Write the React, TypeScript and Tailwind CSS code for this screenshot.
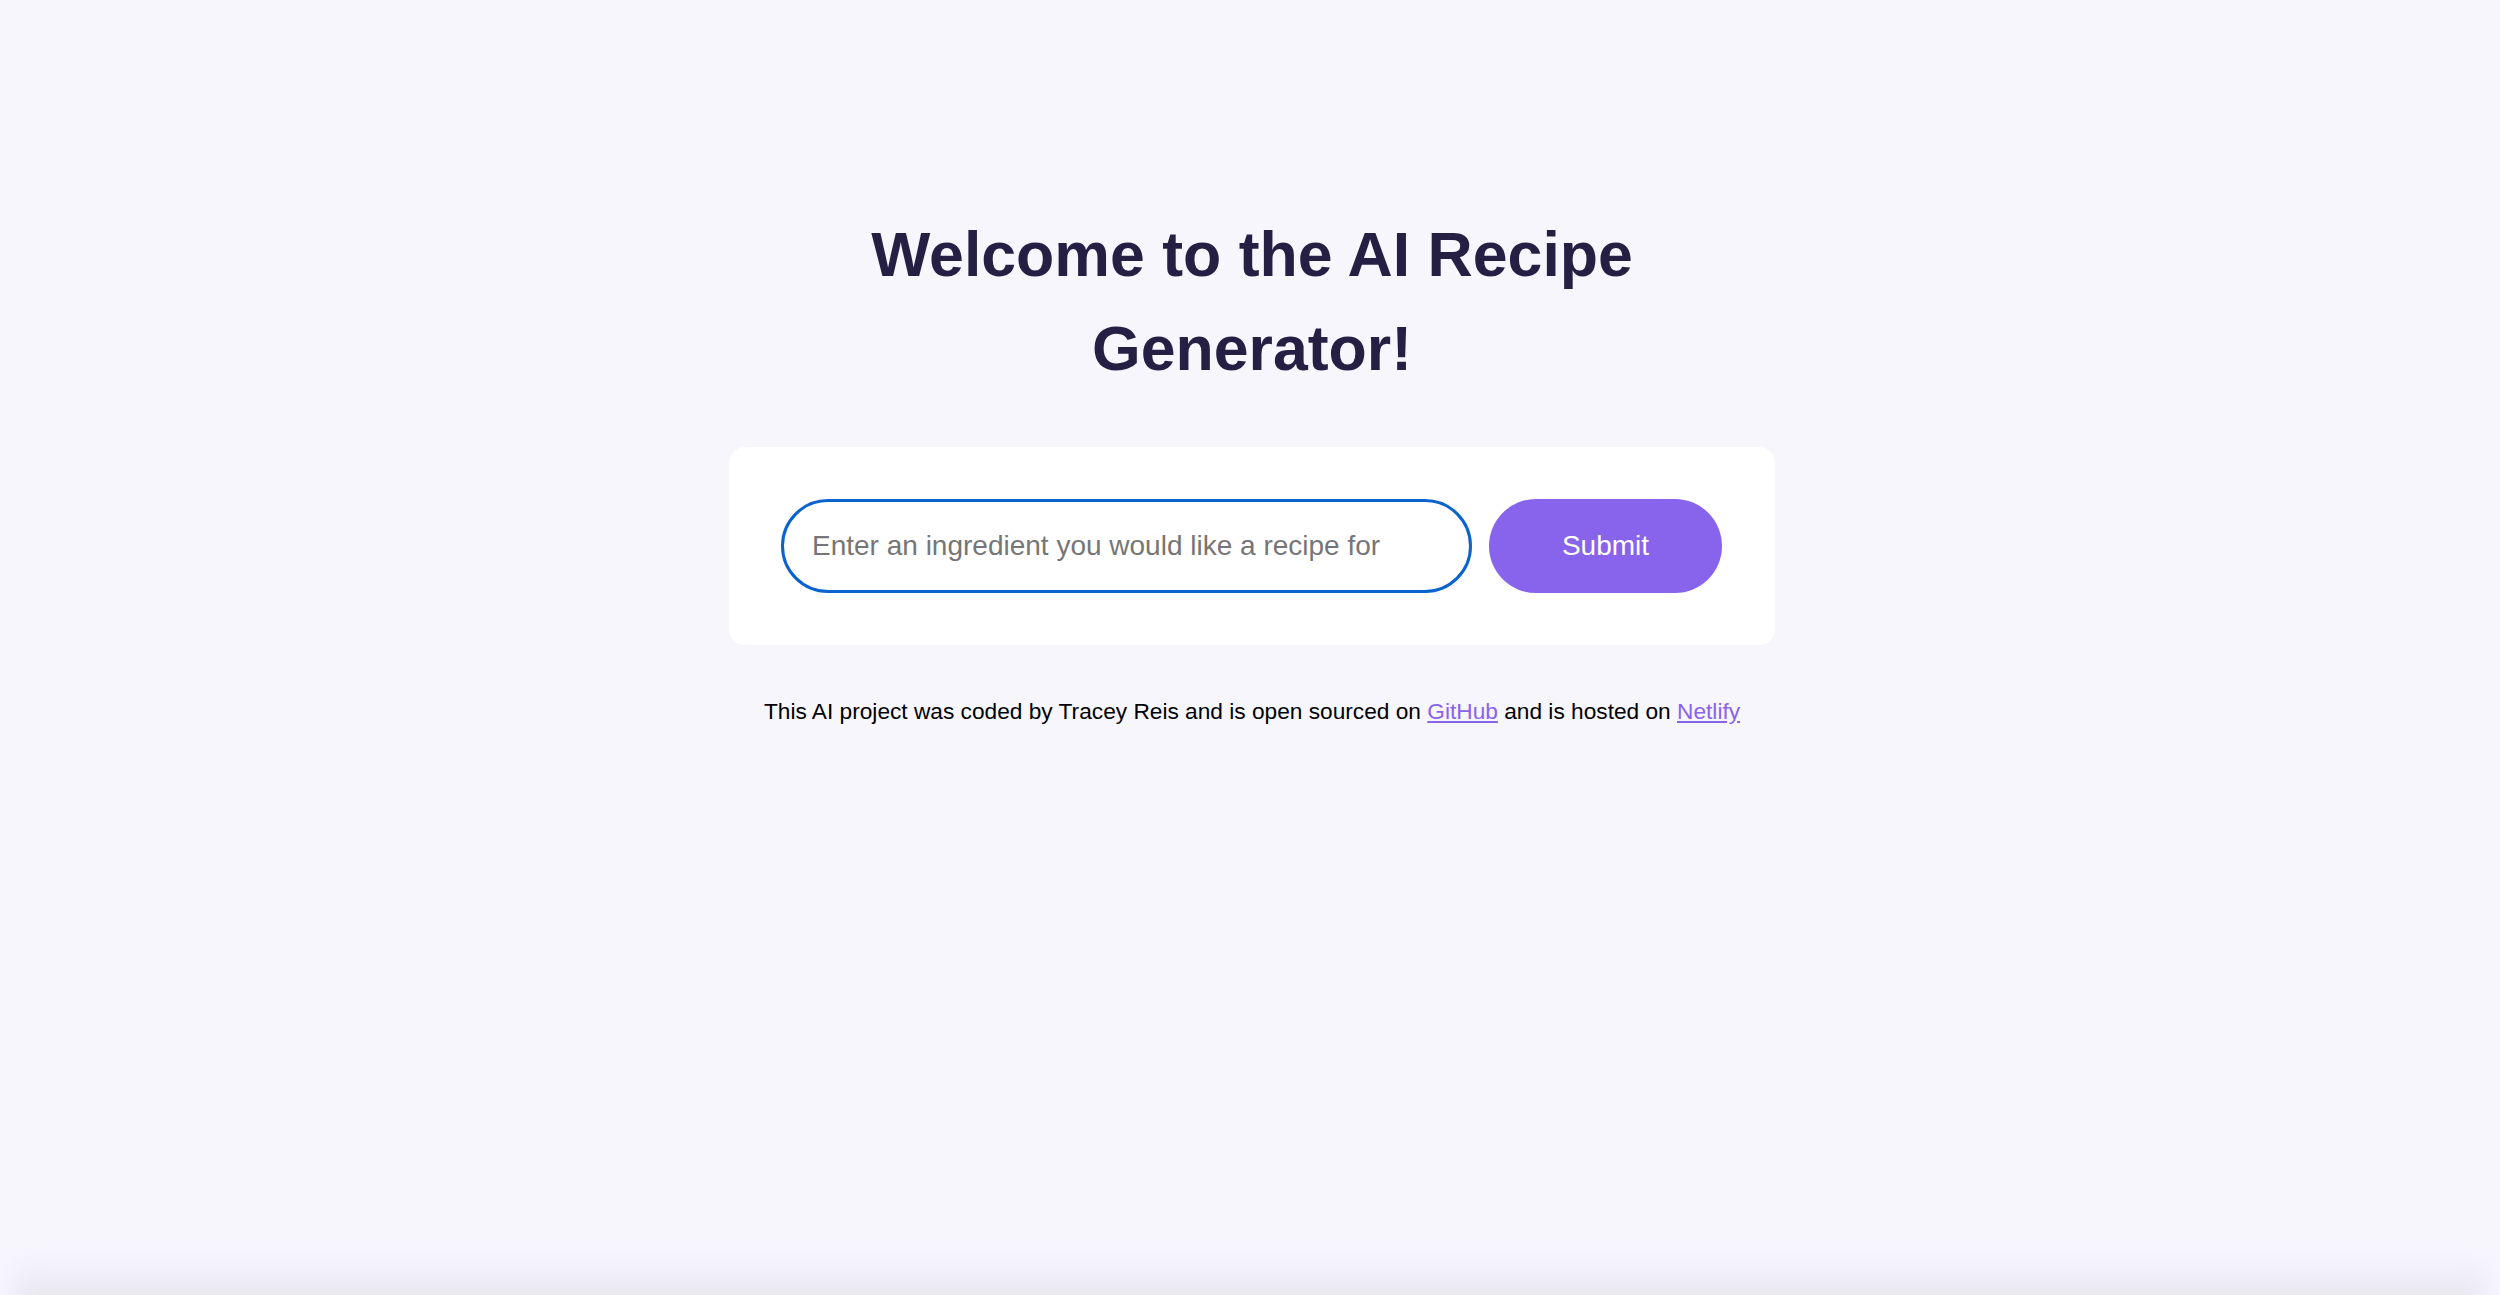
import { useState } from 'react';

export default function App() {
  const [ingredient, setIngredient] = useState('');

  return (
    <div
      className="min-h-screen h-[1295px] overflow-hidden flex flex-col bg-[#f7f6fd] text-black"
      style={{ fontFamily: '"Liberation Sans", Arial, Helvetica, sans-serif' }}
    >
      <main className="flex flex-col items-center pt-[207px] pl-[4px]">
        <div className="w-[1046px]">
          <h1 className="text-center text-[62.6px] leading-[94px] font-bold text-[#251f44]">
            Welcome to the AI Recipe Generator!
          </h1>

          <form
            className="mt-[52px] bg-white rounded-[16px] p-[52px] flex items-center gap-[17px]"
            onSubmit={(e) => e.preventDefault()}
          >
            <input
              type="text"
              value={ingredient}
              onChange={(e) => setIngredient(e.target.value)}
              placeholder="Enter an ingredient you would like a recipe for"
              className="w-[691px] h-[94px] rounded-full border-[3px] border-[#0b63ce] bg-white pl-[28px] pr-[24px] text-[28px] text-black placeholder:text-[#767676] outline-none"
            />
            <button
              type="submit"
              className="w-[233px] h-[94px] rounded-full bg-[#8863eb] text-white text-[28px]"
            >
              Submit
            </button>
          </form>

          <p className="mt-[53px] text-center text-[22.7px] leading-[26px]">
            This AI project was coded by Tracey Reis and is open sourced on{' '}
            <a href="#" className="text-[#8a63ec] underline">
              GitHub
            </a>{' '}
            and is hosted on{' '}
            <a href="#" className="text-[#8a63ec] underline">
              Netlify
            </a>
          </p>
        </div>
      </main>

      <div className="mt-auto mx-[14px] h-[48px] bg-gradient-to-b from-transparent to-[#e4e3eb] blur-[10px] translate-y-[10px]" />
    </div>
  );
}
